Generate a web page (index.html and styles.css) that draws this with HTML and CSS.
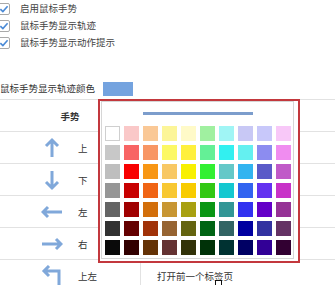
FILE: index.html
```html
<!DOCTYPE html>
<html><head><meta http-equiv="Content-Type" content="text/html; charset=UTF-8">
  <title>鼠标手势</title>
  <link rel="stylesheet" href="styles.css">
</head>
<body>
<div class="page">
  <ul class="opts">
    <li><svg class="chk" width="12" height="12" viewBox="0 0 12 12"><rect x="0.5" y="0.5" width="11" height="11" rx="1.5" fill="#fff" stroke="#a9a9a9"/><path d="M2.4 6.2 L4.9 8.6 L9.6 3.2" fill="none" stroke="#4a8ad6" stroke-width="1.6"/></svg>启用鼠标手势</li>
    <li><svg class="chk" width="12" height="12" viewBox="0 0 12 12"><rect x="0.5" y="0.5" width="11" height="11" rx="1.5" fill="#fff" stroke="#a9a9a9"/><path d="M2.4 6.2 L4.9 8.6 L9.6 3.2" fill="none" stroke="#4a8ad6" stroke-width="1.6"/></svg>鼠标手势显示轨迹</li>
    <li><svg class="chk" width="12" height="12" viewBox="0 0 12 12"><rect x="0.5" y="0.5" width="11" height="11" rx="1.5" fill="#fff" stroke="#a9a9a9"/><path d="M2.4 6.2 L4.9 8.6 L9.6 3.2" fill="none" stroke="#4a8ad6" stroke-width="1.6"/></svg>鼠标手势显示动作提示</li>
  </ul>

  <div class="color-row">
    <span class="color-label">鼠标手势显示轨迹颜色</span>
    <span class="swatch"></span>
  </div>

  <div class="gestures">
    <div class="g-row g-head"><div class="g-name">手势</div><div class="g-act">动作</div></div>
    <div class="g-row">
      <div class="g-name"><svg class="arrow" width="22" height="22" viewBox="0 0 22 22"><path d="M11 20 V3 M5 9 L11 3 L17 9"/></svg><span>上</span></div>
      <div class="g-act">向上滚动</div>
    </div>
    <div class="g-row">
      <div class="g-name"><svg class="arrow" width="22" height="22" viewBox="0 0 22 22"><path d="M11 2 V19 M5 13 L11 19 L17 13"/></svg><span>下</span></div>
      <div class="g-act">向下滚动</div>
    </div>
    <div class="g-row">
      <div class="g-name"><svg class="arrow" width="22" height="22" viewBox="0 0 22 22"><path d="M21 11 H2 M7 6 L2 11 L7 16"/></svg><span>左</span></div>
      <div class="g-act">后退</div>
    </div>
    <div class="g-row">
      <div class="g-name"><svg class="arrow" width="22" height="22" viewBox="0 0 22 22"><path d="M1 11 H20 M15 6 L20 11 L15 16"/></svg><span>右</span></div>
      <div class="g-act">前进</div>
    </div>
    <div class="g-row">
      <div class="g-name"><svg class="arrow" width="22" height="22" viewBox="0 0 22 22"><path d="M18 22 V6 H3 M8 1 L3 6 L8 11"/></svg><span>上左</span></div>
      <div class="g-act">打开前一个标签页</div>
    </div>
  </div>

  <div class="picker">
    <div class="picker-box">
      <div class="preview"></div>
      <div class="palette" id="palette"></div>
    </div>
  </div>

  <svg class="cursor" width="8" height="6" viewBox="0 0 8 6"><rect x="0.5" y="0.5" width="6" height="6" fill="#fff" stroke="#111"/></svg>
</div>
<script>
  var colors=[
    '#ffffff','#fac8c8','#fac896','#fcf598','#fffac8','#a0f0a0','#a0f5f5','#c8c8f5','#c8c8fa','#f8c8f8',
    '#c8c8c8','#f86464','#f89664','#fcf864','#fff03c','#64f096','#32f0f0','#64f0f0','#8c8cf0','#f08cf0',
    '#bebebe','#f80000','#f89614','#f8c864','#f8f000','#32f032','#64c8c8','#32b4f0','#5a5ac8','#c05ac8',
    '#969696','#c80000','#f06414','#f8c832','#f8cc00','#32c814','#14c8d0','#3264f0','#6432f0','#c832c8',
    '#646464','#a00000','#d26e0a','#c89632','#a8a010','#0a9614','#329696','#3232f0','#6400c8','#963296',
    '#323232','#640000','#a03208','#966432','#646410','#006414','#326464','#0000a0','#3232a0','#643264',
    '#0a0a0a','#320000','#643205','#643232','#323208','#003208','#003232','#000064','#320096','#320032'
  ];
  var palette=document.getElementById('palette');
  for(var i=0;i<colors.length;i++){
    var cell=document.createElement('span');
    cell.className=i===0?'cell white':'cell';
    cell.style.background=colors[i];
    palette.appendChild(cell);
  }
</script>
</body></html>
```

FILE: styles.css
```css
*{margin:0;padding:0;box-sizing:border-box;}
body{background:#fff;font-family:"Noto Sans CJK SC","Noto Sans",sans-serif;font-size:9.5px;color:#444;}
.page{position:relative;width:335px;height:285px;overflow:hidden;}

.opts{list-style:none;}
.opts li{display:flex;align-items:center;height:17px;line-height:17px;}
.chk{margin-left:-2px;margin-right:10px;flex:none;}

.color-row{display:flex;align-items:center;height:15px;margin-top:30px;margin-bottom:3px;color:#333;}
.color-label{white-space:nowrap;line-height:15px;}
.swatch{width:30px;height:14px;margin-left:8px;background:#74a3df;}

.gestures{border-top:1px solid #e2e2e2;}
.g-row{display:flex;height:32px;border-bottom:1px solid #e2e2e2;color:#333;}
.g-name{width:141px;border-right:1px solid #e2e2e2;display:flex;align-items:center;padding-left:41px;}
.g-name span{margin-left:15px;}
.g-head .g-name{justify-content:center;padding-left:0;font-weight:bold;}
.g-act{display:flex;align-items:center;padding-left:16px;}
.g-head .g-act{visibility:hidden;}
.arrow{flex:none;}
.arrow path{fill:none;stroke:#80a8da;stroke-width:3;}

.picker{position:absolute;left:98px;top:99px;width:202px;height:164px;border:2px solid #c3383d;background:#fff;padding:0 4px 2px 1px;}
.picker-box{height:100%;border:1px solid #d6d6d6;padding:10px 2px 0 3px;}
.preview{width:110px;height:3px;margin:0 auto 11px;background:#7c9dcc;}
.palette{display:grid;grid-template-columns:repeat(10,15px);grid-auto-rows:15px;gap:4px;}
.cell{display:block;}
.cell.white{border:1px solid #cfcfcf;}

.cursor{position:absolute;left:215px;top:280px;}
```
